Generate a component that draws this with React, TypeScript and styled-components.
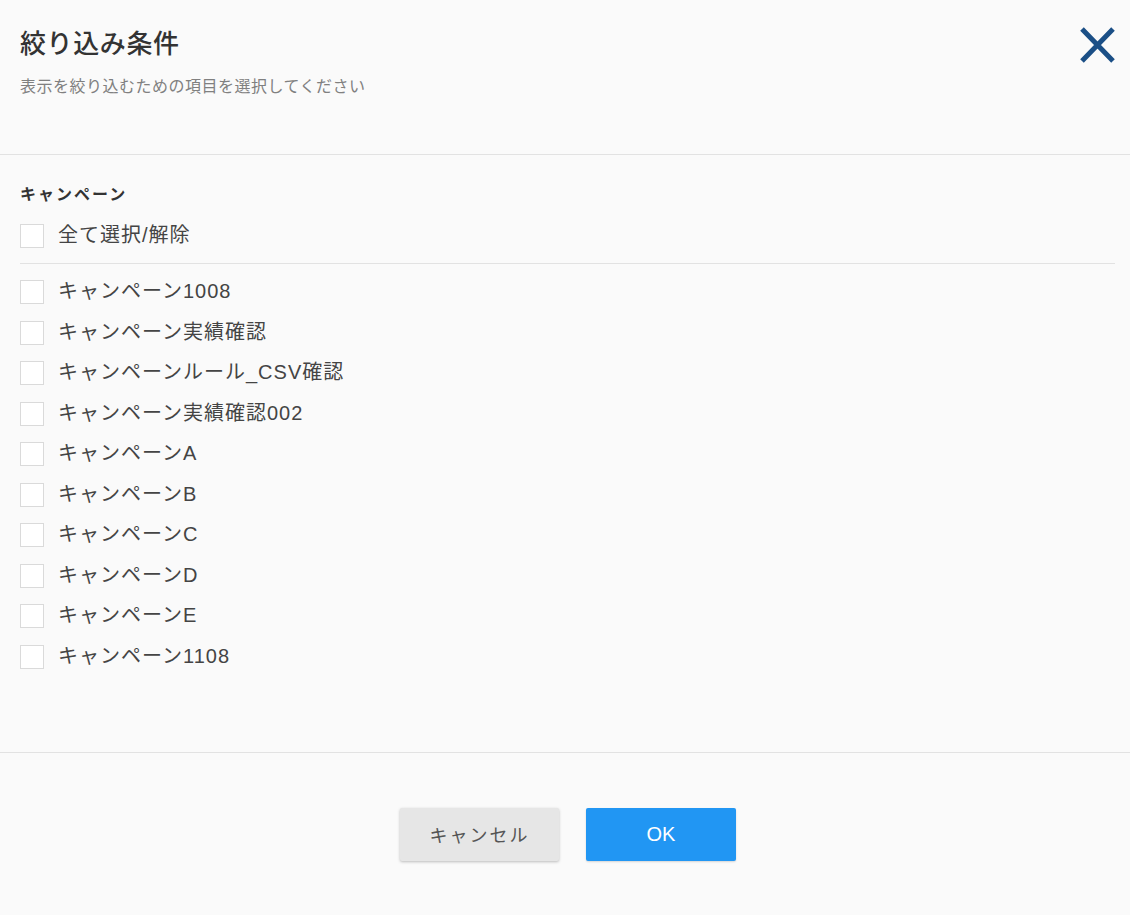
import styled, { createGlobalStyle } from "styled-components";

// ------ Global ------ //
const GlobalStyle = createGlobalStyle`
  html, body {
    margin: 0;
    padding: 0;
    background-color: #fafafa;
  }
  body {
    font-family: "Liberation Sans", "Noto Sans CJK JP", sans-serif;
    color: #333;
  }
`;

// ------ Styled ------ //
const Page = styled.div`
  width: 1130px;
  height: 915px;
  display: flex;
  flex-direction: column;
  background-color: #fafafa;
`;
const Header = styled.header`
  height: 155px;
  box-sizing: border-box;
  display: flex;
  justify-content: space-between;
  align-items: flex-start;
  padding: 0 15px 0 20px;
  border-bottom: 1px solid #e2e2e2;
`;
const Heading = styled.div`
  padding-top: 26px;
`;
const Title = styled.h1`
  margin: 0;
  font-size: 26px;
  line-height: 36px;
  font-weight: 500;
  letter-spacing: 0.6px;
  color: #333;
`;
const Subtitle = styled.p`
  margin: 14px 0 0;
  font-size: 16px;
  line-height: 22px;
  letter-spacing: 0.5px;
  color: #808080;
`;
const CloseButton = styled.button`
  margin-top: 27px;
  padding: 0;
  width: 35px;
  height: 36px;
  border: none;
  background: none;
  cursor: pointer;
  svg {
    display: block;
  }
`;
const Body = styled.main`
  flex: 1;
  padding: 28px 15px 0 20px;
  border-bottom: 1px solid #e2e2e2;
`;
const GroupLabel = styled.h2`
  margin: 0 0 16px;
  font-size: 16px;
  line-height: 24px;
  font-weight: 700;
  letter-spacing: 2px;
  color: #333;
`;
const SelectAll = styled.label`
  display: flex;
  align-items: center;
  gap: 14px;
  padding-bottom: 14px;
  margin-bottom: 8px;
  border-bottom: 1px solid #e2e2e2;
  font-size: 20px;
  line-height: 24px;
  letter-spacing: 1px;
  color: #444;
  cursor: pointer;
`;
const Row = styled.label`
  display: flex;
  align-items: center;
  gap: 14px;
  height: 40.5px;
  font-size: 20px;
  line-height: 24px;
  letter-spacing: 1px;
  color: #444;
  cursor: pointer;
`;
const Box = styled.span`
  width: 24px;
  height: 24px;
  box-sizing: border-box;
  flex-shrink: 0;
  background-color: #fff;
  border: 1px solid #dadada;
`;
const Text = styled.span`
  padding-bottom: 2px;
`;
const Footer = styled.footer`
  height: 162px;
  display: flex;
  justify-content: center;
  align-items: center;
  gap: 27px;
  padding-left: 6px;
`;
const Button = styled.button<{ primary?: boolean; w: number }>`
  width: ${props => props.w}px;
  height: 53px;
  border: none;
  border-radius: 2px;
  font-family: inherit;
  font-size: ${props => (props.primary ? "20px" : "18px")};
  color: ${props => (props.primary ? "#fff" : "#555")};
  background-color: ${props => (props.primary ? "#2196f3" : "#e6e6e6")};
  box-shadow: ${props =>
    props.primary ? "0 1px 2px rgba(0,0,0,0.15)" : "0 1px 3px rgba(0,0,0,0.25)"};
  letter-spacing: ${props => (props.primary ? "0" : "2px")};
  cursor: pointer;
`;

const campaigns = [
  "キャンペーン1008",
  "キャンペーン実績確認",
  "キャンペーンルール_CSV確認",
  "キャンペーン実績確認002",
  "キャンペーンA",
  "キャンペーンB",
  "キャンペーンC",
  "キャンペーンD",
  "キャンペーンE",
  "キャンペーン1108",
];

function App() {
  return (
    <>
      <GlobalStyle />
      <Page>
        <Header>
          <Heading>
            <Title>絞り込み条件</Title>
            <Subtitle>表示を絞り込むための項目を選択してください</Subtitle>
          </Heading>
          <CloseButton aria-label="閉じる">
            <svg width="35" height="36" viewBox="0 0 35 36">
              <path d="M2 2 L33 34 M33 2 L2 34" stroke="#1b4f86" strokeWidth="5" fill="none" />
            </svg>
          </CloseButton>
        </Header>

        <Body>
          <GroupLabel>キャンペーン</GroupLabel>
          <SelectAll>
            <Box />
            <Text>全て選択/解除</Text>
          </SelectAll>
          {campaigns.map(name => (
            <Row key={name}>
              <Box />
              <Text>{name}</Text>
            </Row>
          ))}
        </Body>

        <Footer>
          <Button w={159}>キャンセル</Button>
          <Button primary w={150}>OK</Button>
        </Footer>
      </Page>
    </>
  );
}

export default App;
